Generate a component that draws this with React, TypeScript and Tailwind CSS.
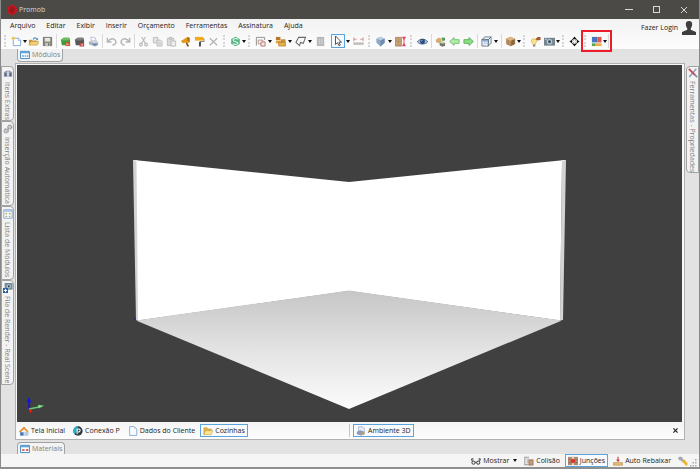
import type { ReactNode } from "react";

type IconName =
  | "new" | "open" | "save" | "import" | "export" | "print" | "undo" | "redo"
  | "cut" | "copy" | "paste" | "hammer" | "roller" | "delete" | "sync" | "plan"
  | "modules" | "shape" | "panel" | "pointer" | "measure" | "shield" | "height"
  | "eye" | "render" | "prev" | "next" | "cube" | "crate" | "light" | "camera"
  | "move" | "colors" | "window" | "materials" | "extras" | "gears" | "grid" | "queue"
  | "tools" | "home" | "link" | "doc" | "folder" | "scene" | "glasses" | "collision"
  | "joints" | "lower" | "wrench" | "user";

const drawings: Record<IconName, ReactNode> = {
  new: (
    <>
      <path d="M2.5 2.5h6l2 2v6h-8z" fill="#fff" stroke="#7fa3d6" />
      <path d="M8 2v3h3" fill="#dbe8fa" stroke="#7fa3d6" strokeWidth=".7" />
      <path d="M2.500 0l1 1.500 2 1-2 1-1 1.700-1-1.700-1.500-1 1.500-1z" fill="#f3c544" />
    </>
  ),
  open: (
    <>
      <path d="M1 10V4h3l1 1h4v2H3z" fill="#c99a3a" />
      <path d="M1 10l2-4h9l-2 4z" fill="#f4cf70" stroke="#b98d35" strokeWidth=".5" />
      <path d="M5 3.500c1-2.500 3.500-2.500 4.500-1L11 2v2.500H8.500l.5-.9C8 2.700 7 3 6 4z" fill="#6d9ccb" />
    </>
  ),
  save: (
    <>
      <path d="M1.500 1.500h9v9h-9z" fill="#8a8a80" stroke="#6d6d66" />
      <path d="M3 2h6v4H3z" fill="#e6e6de" />
      <path d="M3.500 7.500h5V11h-5z" fill="#c4c4bc" />
      <path d="M6.500 8h1.200v2.500H6.500z" fill="#666" />
    </>
  ),
  import: (
    <>
      <path d="M1 4l3-2h6l1 2v6H2z" fill="#3f9a3b" />
      <path d="M1 4l3-2h6l1 2-3 1H3z" fill="#6cbd5c" />
      <path d="M6 6.500h5V11H6z" fill="#c8573b" />
      <path d="M7 8l3 1-3 1z" fill="#f5c1a8" />
    </>
  ),
  export: (
    <>
      <path d="M1 4l3-2h6l1 2v6H2z" fill="#555" />
      <path d="M1 4l3-2h6l1 2-3 1H3z" fill="#7d7d7d" />
      <path d="M6 7.500h5v4H6z" fill="#b8534a" />
      <path d="M7.500 9.500l2-1.300v2.600z" fill="#f0bdb0" />
    </>
  ),
  print: (
    <>
      <path d="M3 1l5 1 1 4-5 1z" fill="#f7fbff" stroke="#8c9cae" strokeWidth=".6" />
      <path d="M1 6l3-1h5l2 2v3l-3 1.500L1 9z" fill="#a3afbd" />
      <path d="M1 6l3-1h5l2 2-3 1z" fill="#d0d7e0" />
      <path d="M5 9.500l4-1.500 1 1-3.500 1.500z" fill="#5d7fae" />
    </>
  ),
  undo: <path d="M1.500 2v4.500H6M2 6c2-3 6-4 8-1.500s0 5-3 5.500" fill="none" stroke="#b5b5b5" strokeWidth="1.600" />,
  redo: <path d="M10.500 2v4.500H6M10 6C8 3 4 2 2 4.500s0 5 3 5.500" fill="none" stroke="#b5b5b5" strokeWidth="1.600" />,
  cut: (
    <g fill="none" stroke="#b9b9b9" strokeWidth="1.200">
      <path d="M4 1l4 7M8 1L4 8" />
      <circle cx="3.200" cy="9.300" r="1.500" />
      <circle cx="8.800" cy="9.300" r="1.500" />
    </g>
  ),
  copy: (
    <g fill="#e2e2e2" stroke="#bcbcbc">
      <path d="M1.500 1.500h5v6h-5z" />
      <path d="M5.500 4.500h4l1.500 1.500v5H5.500z" />
      <path d="M7 7.500h2.500M7 9h2.500" strokeWidth=".7" />
    </g>
  ),
  paste: (
    <g fill="#dadada" stroke="#bcbcbc">
      <path d="M1.500 2.500h7v8h-7z" />
      <path d="M3.500 1.500h3v2h-3z" />
      <path d="M5.500 5.500h5V11h-5z" fill="#eee" />
    </g>
  ),
  hammer: (
    <>
      <path d="M1 5.500l7-4.500 2.500 1v4.500L8 8.500 6 7 3 8z" fill="#e09a1c" />
      <path d="M6 7l2 1 2 3-2 .8z" fill="#7b4f17" />
      <path d="M8 1l2.500 1v4.500L8 5z" fill="#b46f10" />
    </>
  ),
  roller: (
    <>
      <path d="M1 1h9v4H1z" fill="#f1aa1e" />
      <path d="M10 3h1v3H6.500v2" fill="none" stroke="#777" strokeWidth=".9" />
      <path d="M5.500 6.500h2v5h-2z" fill="#444" />
    </>
  ),
  delete: <path d="M2 2.500l8 7.500M10 2.500L2 10" stroke="#b4b4b4" strokeWidth="1.400" />,
  sync: (
    <>
      <path d="M6 .8l4.700 2.500v5.400L6 11.200 1.300 8.700V3.300z" fill="#58b584" />
      <path d="M9 3.500C6 2 3 3 3.500 4.700S8.500 6 8.700 7.500 5.500 9.800 3 8.500" fill="none" stroke="#e2f6ea" strokeWidth="1.200" />
    </>
  ),
  plan: (
    <g fill="none" stroke="#8c8c8c">
      <path d="M1.500 10.500v-9h9v3" />
      <path d="M3.500 4.500h5v4h-5z" stroke="#b98a86" />
      <path d="M6.500 6.500h4.500V11H6.500z" fill="#f6e3e0" stroke="#b27a74" />
    </g>
  ),
  modules: (
    <>
      <path d="M1 1h5v3.500H1z" fill="#b5792a" />
      <path d="M1 5h6v3H1z" fill="#e3a53b" />
      <path d="M4 7h7.500v4H4z" fill="#e8af46" stroke="#a36c1f" strokeWidth=".6" />
      <path d="M7 4h4v2.500H7z" fill="#d69a38" stroke="#a36c1f" strokeWidth=".6" />
    </>
  ),
  shape: <path d="M4 1.500h7.500L9 8 6 7 5 10.500 1 7z" fill="#fafafa" stroke="#666" strokeWidth="1.100" />,
  panel: (
    <>
      <path d="M2 1h8v10H2z" fill="#b8b8b8" />
      <path d="M4 3h2v6H4zM7 3h1.500v6H7z" fill="#cdcdcd" />
    </>
  ),
  pointer: <path d="M3.500 1v8.500l2-1.800 1.500 3 1.300-.7-1.400-2.800H9.500z" fill="#fff" stroke="#444" strokeWidth=".9" />,
  measure: (
    <>
      <path d="M1 1.500v4M11 1.500v4M1 3.500h3M8 3.500h3" stroke="#d08a8a" />
      <path d="M.5 7h11v2.500H.5z" fill="#b9b0ae" />
      <path d="M3 7v1.500M6 7v1.500M9 7v1.500" stroke="#fff" strokeWidth=".7" />
    </>
  ),
  shield: (
    <>
      <path d="M6 .8l4.500 2v4.500L6 11.500 1.500 7.300V2.800z" fill="#8fa9c6" />
      <path d="M6 4.500L10.500 2.800v4.500L6 11.500z" fill="#6d8caf" />
      <path d="M6 .8l4.500 2L6 4.500 1.500 2.800z" fill="#bccde0" />
    </>
  ),
  height: (
    <>
      <path d="M.5 1.500h6.500v9.500H.5z" fill="#c9a173" stroke="#95704a" strokeWidth=".7" />
      <path d="M3.700 2v9M.5 6H7" stroke="#b08a60" strokeWidth=".6" />
      <path d="M9.800 2.500v7" stroke="#e0406a" />
      <path d="M8 1h3.600L9.800 4zM8 11h3.600L9.800 8z" fill="#e0406a" stroke="#e0406a" strokeWidth=".5" />
    </>
  ),
  eye: (
    <>
      <path d="M.3 6.300C3 2.500 9 2.500 11.700 6.300 9 9.700 3 9.700.3 6.300z" fill="#a9bfd8" stroke="#3d5878" strokeWidth=".9" />
      <circle cx="6" cy="6" r="2.700" fill="#234878" />
      <circle cx="5.300" cy="5.300" r=".7" fill="#dcebfb" />
    </>
  ),
  render: (
    <>
      <path d="M1 4l3-2.500 3 1.500v3L4 8 1 6.500z" fill="#d4ad74" />
      <path d="M7 1.500l4 .5V5L8 5.500z" fill="#5a9a5c" />
      <path d="M5 7l3-1 3 1.500v3L8 11.700 5 10z" fill="#6f7a66" />
      <path d="M5 7l3-1 3 1.500-3 1z" fill="#d9d3b6" />
    </>
  ),
  prev: <path d="M.7 6L5.500 1.700V4h5.500v4H5.500v2.300z" fill="#b5ebab" stroke="#63b866" strokeWidth=".9" />,
  next: <path d="M11.300 6L6.500 1.700V4H1v4h5.500v2.300z" fill="#8fdc85" stroke="#4aac50" strokeWidth=".9" />,
  cube: (
    <>
      <path d="M1 4h7v7H1zM1 4l3-3h7L8 4zM8 4l3-3v7l-3 3z" fill="#eef4fb" stroke="#5d6c7c" strokeWidth=".9" />
      <path d="M4 1v7h7M4 8l-3 3" fill="none" stroke="#92a7be" strokeWidth=".6" />
      <path d="M1.500 4.500h6V6h-6z" fill="#7da5d0" />
    </>
  ),
  crate: (
    <>
      <path d="M6 .8L11 3v5.700L6 11.300 1 8.700V3z" fill="#c09766" />
      <path d="M6 5.200L11 3v5.700L6 11.300z" fill="#957048" />
      <path d="M6 .8L11 3 6 5.200 1 3z" fill="#dbb98a" />
      <path d="M3.500 4.200v5.700M8.500 4.200v5.700" stroke="#735029" strokeWidth=".5" />
    </>
  ),
  light: (
    <>
      <path d="M4 3c2 0 3.500 1.500 3 3.500C6.700 7.700 5.500 8 5.500 9.500h-2C3.500 8 1.500 7.500 1.500 5.500 1.500 4 2.500 3 4 3z" fill="#fbe691" stroke="#caa238" strokeWidth=".7" />
      <path d="M3.200 9.500h2.600v2H3.200z" fill="#888" />
      <path d="M6 4l2-3h3.500v3L9 5z" fill="#a35c2a" />
    </>
  ),
  camera: (
    <>
      <path d="M0 2h12v8.500H0z" fill="#74858f" />
      <path d="M1 3h2v1H1z" fill="#d7e0e4" />
      <circle cx="6" cy="6.300" r="3" fill="#b9ccd5" />
      <circle cx="6" cy="6.300" r="1.600" fill="#344d5b" />
    </>
  ),
  move: (
    <g fill="#111">
      <path d="M6 .5L8.300 3.500H3.700zM6 11.500L3.700 8.500h4.600zM.5 6L3.500 3.700v4.600zM11.500 6L8.500 8.300V3.700z" />
      <path d="M3.500 3.500l1.500 1M8.500 3.500L7 4.500M3.500 8.500L5 7.500M8.500 8.500L7 7.500" stroke="#111" />
    </g>
  ),
  colors: (
    <>
      <path d="M1 1h6v6H1z" fill="#4676c2" />
      <path d="M7 1h4.500v6H7z" fill="#df5a50" />
      <path d="M1 8h4v3H1z" fill="#5ba54e" />
      <path d="M5 8h6.500v3H5z" fill="#edaa47" />
    </>
  ),
  window: (
    <>
      <path d="M.7 1.700h10.600v8.600H.7z" fill="#fff" stroke="#438dc8" strokeWidth="1.200" />
      <path d="M1 2h10v2H1z" fill="#63a7dc" />
      <path d="M2.500 6h2v2.500h-2zM5.500 6H7v2.500H5.500zM8 6h2v2.500H8z" fill="#88aecb" />
    </>
  ),
  materials: (
    <>
      <path d="M.7 1.700h10.600v8.600H.7z" fill="#fff" stroke="#438dc8" strokeWidth="1.200" />
      <path d="M1 2h10v2H1z" fill="#63a7dc" />
      <path d="M2.500 6h3v2.500h-3zM7 6h3v2.500H7z" fill="#d47070" />
    </>
  ),
  extras: (
    <>
      <path d="M1 4l3-2h4l3 2v5H1z" fill="#8b97ad" />
      <path d="M2 5h2v4H2zM8 5h2v4H8z" fill="#5c6985" />
      <path d="M5 3h2v5H5z" fill="#dbe0e9" />
    </>
  ),
  gears: (
    <g fill="#c9c9ce" stroke="#96969c" strokeWidth="1.500">
      <circle cx="8.200" cy="3.800" r="2.400" strokeDasharray="1.500 .6" />
      <circle cx="3.800" cy="8.300" r="2.400" strokeDasharray="1.500 .6" />
    </g>
  ),
  grid: (
    <>
      <path d="M1 1h10v10H1z" fill="#fffef4" stroke="#7396cf" />
      <path d="M1.500 1.500h9v1.700h-9z" fill="#9cb9e4" />
      <path d="M3 4.500h2v2H3zM7 4.500h2v2H7zM3 8h2v1.500H3zM7 8h2v1.500H7z" fill="#a6ad82" />
    </>
  ),
  queue: (
    <>
      <path d="M2 0h9.500v8H2z" fill="#718b99" />
      <circle cx="7" cy="4" r="2.600" fill="#b9cbd4" />
      <circle cx="7" cy="4" r="1.300" fill="#28465a" />
      <path d="M0 6h6v6H0z" fill="#245f9f" />
      <path d="M3 7v4M1 9h4" stroke="#fff" strokeWidth="1.200" />
    </>
  ),
  tools: (
    <>
      <path d="M10 1L3 9l-1.500 2" stroke="#8c9dbb" strokeWidth="1.700" />
      <path d="M1 1l7.500 7.500" stroke="#c44a58" strokeWidth="2.200" />
      <path d="M8 8l3 3" stroke="#7f93b4" strokeWidth="2" />
    </>
  ),
  home: (
    <>
      <path d="M2 6l4-4 4 4v5H2z" fill="#f6f3ee" stroke="#9eaec4" strokeWidth=".6" />
      <path d="M0 6.500L6 .5l5.500 6-1.500 1-4-4L1.300 8z" fill="#e88c2a" />
      <path d="M6.500 7h5v4.500h-5z" fill="#b9c9e2" />
      <path d="M1.500 7.500h4v4h-4z" fill="#3f78bb" />
    </>
  ),
  link: (
    <>
      <circle cx="6" cy="6" r="5.600" fill="#2c3a44" />
      <path d="M6 .4A5.600 5.600 0 0 0 2 10L5 6z" fill="#27b1c6" />
      <path d="M5 10V4c4-2 5 3 1 3.200" fill="none" stroke="#fff" strokeWidth="1.300" />
    </>
  ),
  doc: (
    <>
      <path d="M2 .7h5.500L10.500 3.700v7.600H2z" fill="#fafdff" stroke="#7b9fd6" strokeWidth="1" />
      <path d="M7.500.7v3h3z" fill="#b5cdef" />
    </>
  ),
  folder: (
    <>
      <path d="M1 10V2h4l1 1.500h4V6H3z" fill="#e7b44b" stroke="#b98a2f" strokeWidth=".5" />
      <path d="M1 10.500L3 5.500h8.700l-2 5z" fill="#ffe59a" stroke="#c29232" strokeWidth=".6" />
    </>
  ),
  scene: (
    <>
      <path d="M3 1h5l2 2v6H3z" fill="#e7edf6" stroke="#8998b3" strokeWidth=".7" />
      <path d="M1 7l4-2 5 2v3l-4 1.500L1 10z" fill="#8a9ab8" />
      <path d="M6 8l4-1v3l-4 1.500z" fill="#cb9a60" />
    </>
  ),
  glasses: (
    <g fill="none" stroke="#333" strokeWidth="1.200">
      <circle cx="3" cy="8" r="1.900" />
      <circle cx="8.700" cy="8" r="1.900" />
      <path d="M1.500 6.500L.7 3.500H3M5 7.500h1.700M10.200 6.500l1-3H9" />
    </g>
  ),
  collision: (
    <>
      <path d="M1 1v10M1 1.500h5M1 10.500h5" fill="none" stroke="#888" />
      <path d="M3 3h3v6H3z" fill="#c5c5c5" />
      <path d="M6 4.500h5V11H6z" fill="#c59a72" stroke="#8d6444" strokeWidth=".7" />
    </>
  ),
  joints: (
    <>
      <path d="M0 1h12v10H0z" fill="#b08c6c" />
      <path d="M0 4.500h12M0 8h12" stroke="#7d614a" strokeWidth=".7" />
      <path d="M5 1h2v10H5z" fill="#efe3d8" />
      <path d="M6 3L9 6 6 9 3 6z" fill="#ee2727" />
    </>
  ),
  lower: (
    <>
      <path d="M6 1v5" stroke="#c3332d" strokeWidth="1.300" />
      <path d="M3.700 4.500h4.600L6 7.300z" fill="#c3332d" />
      <path d="M.7 8h10.600v3H.7z" fill="#f0c17b" stroke="#a5762f" strokeWidth=".7" />
    </>
  ),
  wrench: (
    <>
      <path d="M0 2l2.500-1.500L5 1.500l1 2L8 6 6 8 3.300 5.300 1.300 5z" fill="#a4a9b4" />
      <path d="M5 6.500L7.500 4 12 9.500 10 12z" fill="#f0b42b" />
    </>
  ),
  user: (
    <path d="M6 0c2 0 3 1.400 2.700 3.300C8.500 5 8 5.800 7.500 6.300v1.300L12 9.500V12H0V9.500l4.500-1.900V6.300C4 5.800 3.500 5 3.300 3.300 3 1.400 4 0 6 0z" fill="#3e3e3e" />
  ),
};

function Icon({ name, className = "size-3" }: { name: IconName; className?: string }) {
  return (
    <svg viewBox="0 0 12 12" className={`shrink-0 ${className}`} fill="none" aria-hidden="true">
      {drawings[name]}
    </svg>
  );
}

function Tool({ name, label }: { name: IconName; label: string }) {
  return (
    <button type="button" aria-label={label} className="flex h-3.5 w-3.5 shrink-0 items-center justify-center">
      <Icon name={name} className="size-[11px]" />
    </button>
  );
}

function Triangle() {
  return (
    <svg viewBox="0 0 4 3" className="h-[3px] w-1 shrink-0" aria-hidden="true">
      <path d="M0 0h4L2 3z" fill="#111" />
    </svg>
  );
}

function Caret({ tight = false }: { tight?: boolean }) {
  return (
    <button
      type="button"
      aria-label="Mais opções"
      className={`flex h-3.5 shrink-0 items-center justify-center ${tight ? "w-[3px]" : "w-1.5"}`}
    >
      <Triangle />
    </button>
  );
}

function Sep() {
  return (
    <span className="flex w-1 shrink-0 justify-center">
      <span className="h-3.5 w-px bg-[#d9d9d9]" />
    </span>
  );
}

function Grip() {
  return (
    <span className="flex w-2 shrink-0 justify-center">
      <span className="h-3 border-l-2 border-dotted border-[#d6d6d6]" />
    </span>
  );
}

const menus = ["Arquivo", "Editar", "Exibir", "Inserir", "Orçamento", "Ferramentas", "Assinatura", "Ajuda"];

function TitleBar() {
  return (
    <header className="flex h-[19px] shrink-0 items-center bg-[#4b4a47] pl-1.5 text-[#d8d8d8]">
      <svg viewBox="0 0 12 12" className="size-2.5" aria-hidden="true">
        <circle cx="6" cy="6" r="6" fill="#c4161f" />
        <path d="M6 2v8M3.500 4.500C3 7 4 8.500 5 9M7 3c2.500 0 2.500 4 0 4" stroke="#5a1c1c" fill="none" />
      </svg>
      <h1 className="ml-0.5 flex-1">Promob</h1>
      <div className="flex items-center gap-5 pr-[11px]">
        <button type="button" aria-label="Minimizar" className="flex size-2 items-center">
          <span className="h-px w-full bg-[#d8d8d8]" />
        </button>
        <button type="button" aria-label="Maximizar" className="size-[7px] border border-[#d8d8d8]" />
        <button type="button" aria-label="Fechar" className="size-2">
          <svg viewBox="0 0 8 8" className="size-2">
            <path d="M1 1l6 6M7 1L1 7" stroke="#d8d8d8" />
          </svg>
        </button>
      </div>
    </header>
  );
}

function Toolbar() {
  return (
    <div role="toolbar" aria-label="Ferramentas" className="flex h-4 items-center">
      <Grip />
      <Tool name="new" label="Novo" />
      <Caret tight />
      <Tool name="open" label="Abrir" />
      <Tool name="save" label="Salvar" />
      <Sep />
      <Tool name="import" label="Importar" />
      <Tool name="export" label="Exportar" />
      <Tool name="print" label="Imprimir" />
      <Sep />
      <Tool name="undo" label="Desfazer" />
      <Tool name="redo" label="Refazer" />
      <Sep />
      <Tool name="cut" label="Recortar" />
      <Tool name="copy" label="Copiar" />
      <Tool name="paste" label="Colar" />
      <Tool name="hammer" label="Construir" />
      <Tool name="roller" label="Pintar" />
      <Tool name="delete" label="Excluir" />
      <Grip />
      <Tool name="sync" label="Atualizar" />
      <Caret tight />
      <Grip />
      <Tool name="plan" label="Planta" />
      <Caret />
      <Tool name="modules" label="Agrupar módulos" />
      <Caret />
      <Tool name="shape" label="Forma" />
      <Caret />
      <Tool name="panel" label="Painel" />
      <button
        type="button"
        aria-label="Selecionar"
        aria-pressed="true"
        className="ml-1 flex size-3.5 shrink-0 items-center justify-center border border-[#5ba4dd] bg-[#f4faff]"
      >
        <Icon name="pointer" />
      </button>
      <Caret />
      <Tool name="measure" label="Medir" />
      <Grip />
      <Tool name="shield" label="Volume" />
      <Caret />
      <Tool name="height" label="Altura" />
      <Grip />
      <Tool name="eye" label="Visualizar" />
      <Sep />
      <Tool name="render" label="Renderizar" />
      <Tool name="prev" label="Anterior" />
      <Tool name="next" label="Próximo" />
      <Sep />
      <Tool name="cube" label="Vista" />
      <Caret />
      <Sep />
      <Tool name="crate" label="Modo de exibição" />
      <Caret tight />
      <Grip />
      <Tool name="light" label="Iluminação" />
      <Tool name="camera" label="Câmera" />
      <Caret tight />
      <Grip />
      <Tool name="move" label="Mover" />
      <div className="relative flex h-4 items-center">
        <Grip />
        <Tool name="colors" label="Layout" />
        <Caret tight />
        <Sep />
        <span className="pointer-events-none absolute -inset-y-[3px] left-0 -right-0.5 border-2 border-[#ec1c2b]" />
      </div>
    </div>
  );
}

function SideTab({ name, label, height }: { name: IconName; label: string; height: string }) {
  return (
    <button
      type="button"
      className={`flex w-[13px] flex-col items-center gap-[3px] rounded-r-sm border border-[#a2a2a2] bg-[#f3f3f3] pt-0.5 text-[#808080] ${height}`}
    >
      <Icon name={name} className="size-2.5" />
      <span className="whitespace-nowrap leading-[11px] [writing-mode:vertical-rl]">{label}</span>
    </button>
  );
}

function Scene() {
  return (
    <svg viewBox="0 0 665 357" className="min-h-0 w-full flex-1 bg-[#404040]" role="img" aria-label="Ambiente 3D">
      <defs>
        <linearGradient id="floor" x1="0" y1="0" x2="0" y2="1">
          <stop offset="0" stopColor="#c6c6c6" />
          <stop offset=".5" stopColor="#e3e3e3" />
          <stop offset="1" stopColor="#fcfcfc" />
        </linearGradient>
      </defs>
      <path d="M116 95l4 0 2 160h-3z" fill="#d3d3d3" />
      <path d="M549 95h-4l-2 160h3z" fill="#d3d3d3" />
      <path d="M117 95L332 117 548 95l-3 1-2 159.500L332 226 121 255.500 119.500 96z" fill="#fff" />
      <path d="M332 225.500L545 255.500 332 344 119 255.500z" fill="url(#floor)" />
      <path d="M116 254h3" stroke="#22229c" />
      <path d="M12 344v-8" stroke="#1212e8" strokeWidth="1.500" />
      <path d="M12 332l2.200 5H9.800z" fill="#1212e8" />
      <path d="M12 344l10-2" stroke="#5fcf6f" strokeWidth="1.300" />
      <path d="M21 339.800l6 1-5.300 2.700z" fill="#86dc8a" />
      <path d="M11.500 344.500h4l-2 4z" fill="#ef1a1a" />
    </svg>
  );
}

function DocTab({ name, label, active = false }: { name: IconName; label: string; active?: boolean }) {
  return (
    <button
      type="button"
      className={`flex h-[13px] items-center gap-0.5 border px-0.5 ${
        active ? "border-[#5ba4dd] bg-[#f8fbfe]" : "border-transparent"
      }`}
    >
      <Icon name={name} className="size-2.5" />
      <span className="whitespace-nowrap">{label}</span>
    </button>
  );
}

export default function App() {
  return (
    <div className="flex h-screen flex-col overflow-hidden border-x border-b-2 border-x-[#8a8a8a] border-b-[#8f8f8f] bg-[#e2e2e2] font-['Open_Sans','Noto_Sans',sans-serif] text-[7px] leading-[10px] text-[#222]">
      <TitleBar />
      <div className="flex h-[30px] shrink-0 bg-gradient-to-b from-[#f2f2f2] to-[#fdfdfd]">
        <div className="flex min-w-0 flex-1 flex-col">
          <nav className="flex h-3.5 items-center gap-[11px] pl-[9px]">
            {menus.map((m) => (
              <button type="button" key={m}>
                {m}
              </button>
            ))}
          </nav>
          <Toolbar />
        </div>
        <button type="button" className="flex h-[18px] shrink-0 items-center gap-1 pr-[3px]">
          <span>Fazer Login</span>
          <Icon name="user" className="size-3.5" />
        </button>
      </div>

      <div className="flex h-3.5 shrink-0 items-start pl-4">
        <button type="button" className="flex h-[13px] items-center gap-0.5 rounded-b-sm border border-t-0 border-[#a2a2a2] bg-[#f3f3f3] px-0.5 text-[#808080]">
          <Icon name="window" className="size-2.5" />
          <span>Módulos</span>
        </button>
      </div>

      <div className="flex min-h-0 flex-1">
        <aside className="flex w-3.5 shrink-0 flex-col pt-[3px]">
          <SideTab name="extras" label="Itens Extras" height="h-[55px]" />
          <SideTab name="gears" label="Inserção Automática" height="h-[85px]" />
          <SideTab name="grid" label="Lista de Módulos" height="h-[74px]" />
          <SideTab name="queue" label="Fila de Render - Real Scene" height="h-[105px]" />
        </aside>

        <main className="flex min-w-0 flex-1 flex-col border border-[#b0b0b0] bg-[#f8f8f8]">
          <div className="flex min-h-0 flex-1 flex-col pt-px pr-0.5 pl-px">
            <Scene />
          </div>
          <div className="flex h-[17px] shrink-0 items-center bg-gradient-to-b from-[#f4f4f4] to-[#fdfdfd]">
            <div className="flex w-1/2 items-center gap-0.5 border-r border-[#c6c6c6]">
              <DocTab name="home" label="Tela Inicial" />
              <DocTab name="link" label="Conexão P" />
              <DocTab name="doc" label="Dados do Cliente" />
              <DocTab name="folder" label="Cozinhas" active />
            </div>
            <div className="flex w-1/2 items-center justify-between pl-[3px] pr-1.5">
              <DocTab name="scene" label="Ambiente 3D" active />
              <button type="button" aria-label="Fechar ambiente">
                <svg viewBox="0 0 6 6" className="size-[5px]">
                  <path d="M.5.5l5 5M5.500.5l-5 5" stroke="#222" strokeWidth="1.400" />
                </svg>
              </button>
            </div>
          </div>
        </main>

        <aside className="flex w-3.5 shrink-0 flex-col items-end pt-[3px]">
          <button
            type="button"
            className="flex h-[107px] w-[13px] flex-col items-center gap-[3px] rounded-l-sm border border-[#a2a2a2] bg-[#f3f3f3] pt-px text-[#808080]"
          >
            <Icon name="tools" className="size-2.5" />
            <span className="whitespace-nowrap leading-[11px] [writing-mode:vertical-rl]">Ferramentas - Propriedades</span>
          </button>
        </aside>
      </div>

      <div className="flex h-3.5 shrink-0 items-end pl-4">
        <button type="button" className="flex h-3 items-center gap-0.5 rounded-t-sm border border-b-0 border-[#a2a2a2] bg-[#f3f3f3] px-0.5 text-[#808080]">
          <Icon name="materials" className="size-2.5" />
          <span>Materiais</span>
        </button>
      </div>

      <footer className="flex h-[13px] shrink-0 items-center justify-end gap-0.5 bg-[#f5f5f5]">
        <button type="button" className="flex items-center gap-0.5 pr-0.5">
          <Icon name="glasses" className="size-2.5" />
          <span className="mr-0.5">Mostrar</span>
          <Triangle />
        </button>
        <DocTab name="collision" label="Colisão" />
        <DocTab name="joints" label="Junções" active />
        <DocTab name="lower" label="Auto Rebaixar" />
        <button type="button" aria-label="Configurações" className="ml-0.5">
          <Icon name="wrench" className="size-2.5" />
        </button>
        <svg viewBox="0 0 8 8" className="mr-px size-2 self-end" aria-hidden="true">
          <path d="M5 0h1.500v1.500H5zM2.500 3H4v1.500H2.500zM5 3h1.500v1.500H5zM0 6h1.500v1.500H0zM2.500 6H4v1.500H2.500zM5 6h1.500v1.500H5z" fill="#aaa" />
        </svg>
      </footer>
    </div>
  );
}
